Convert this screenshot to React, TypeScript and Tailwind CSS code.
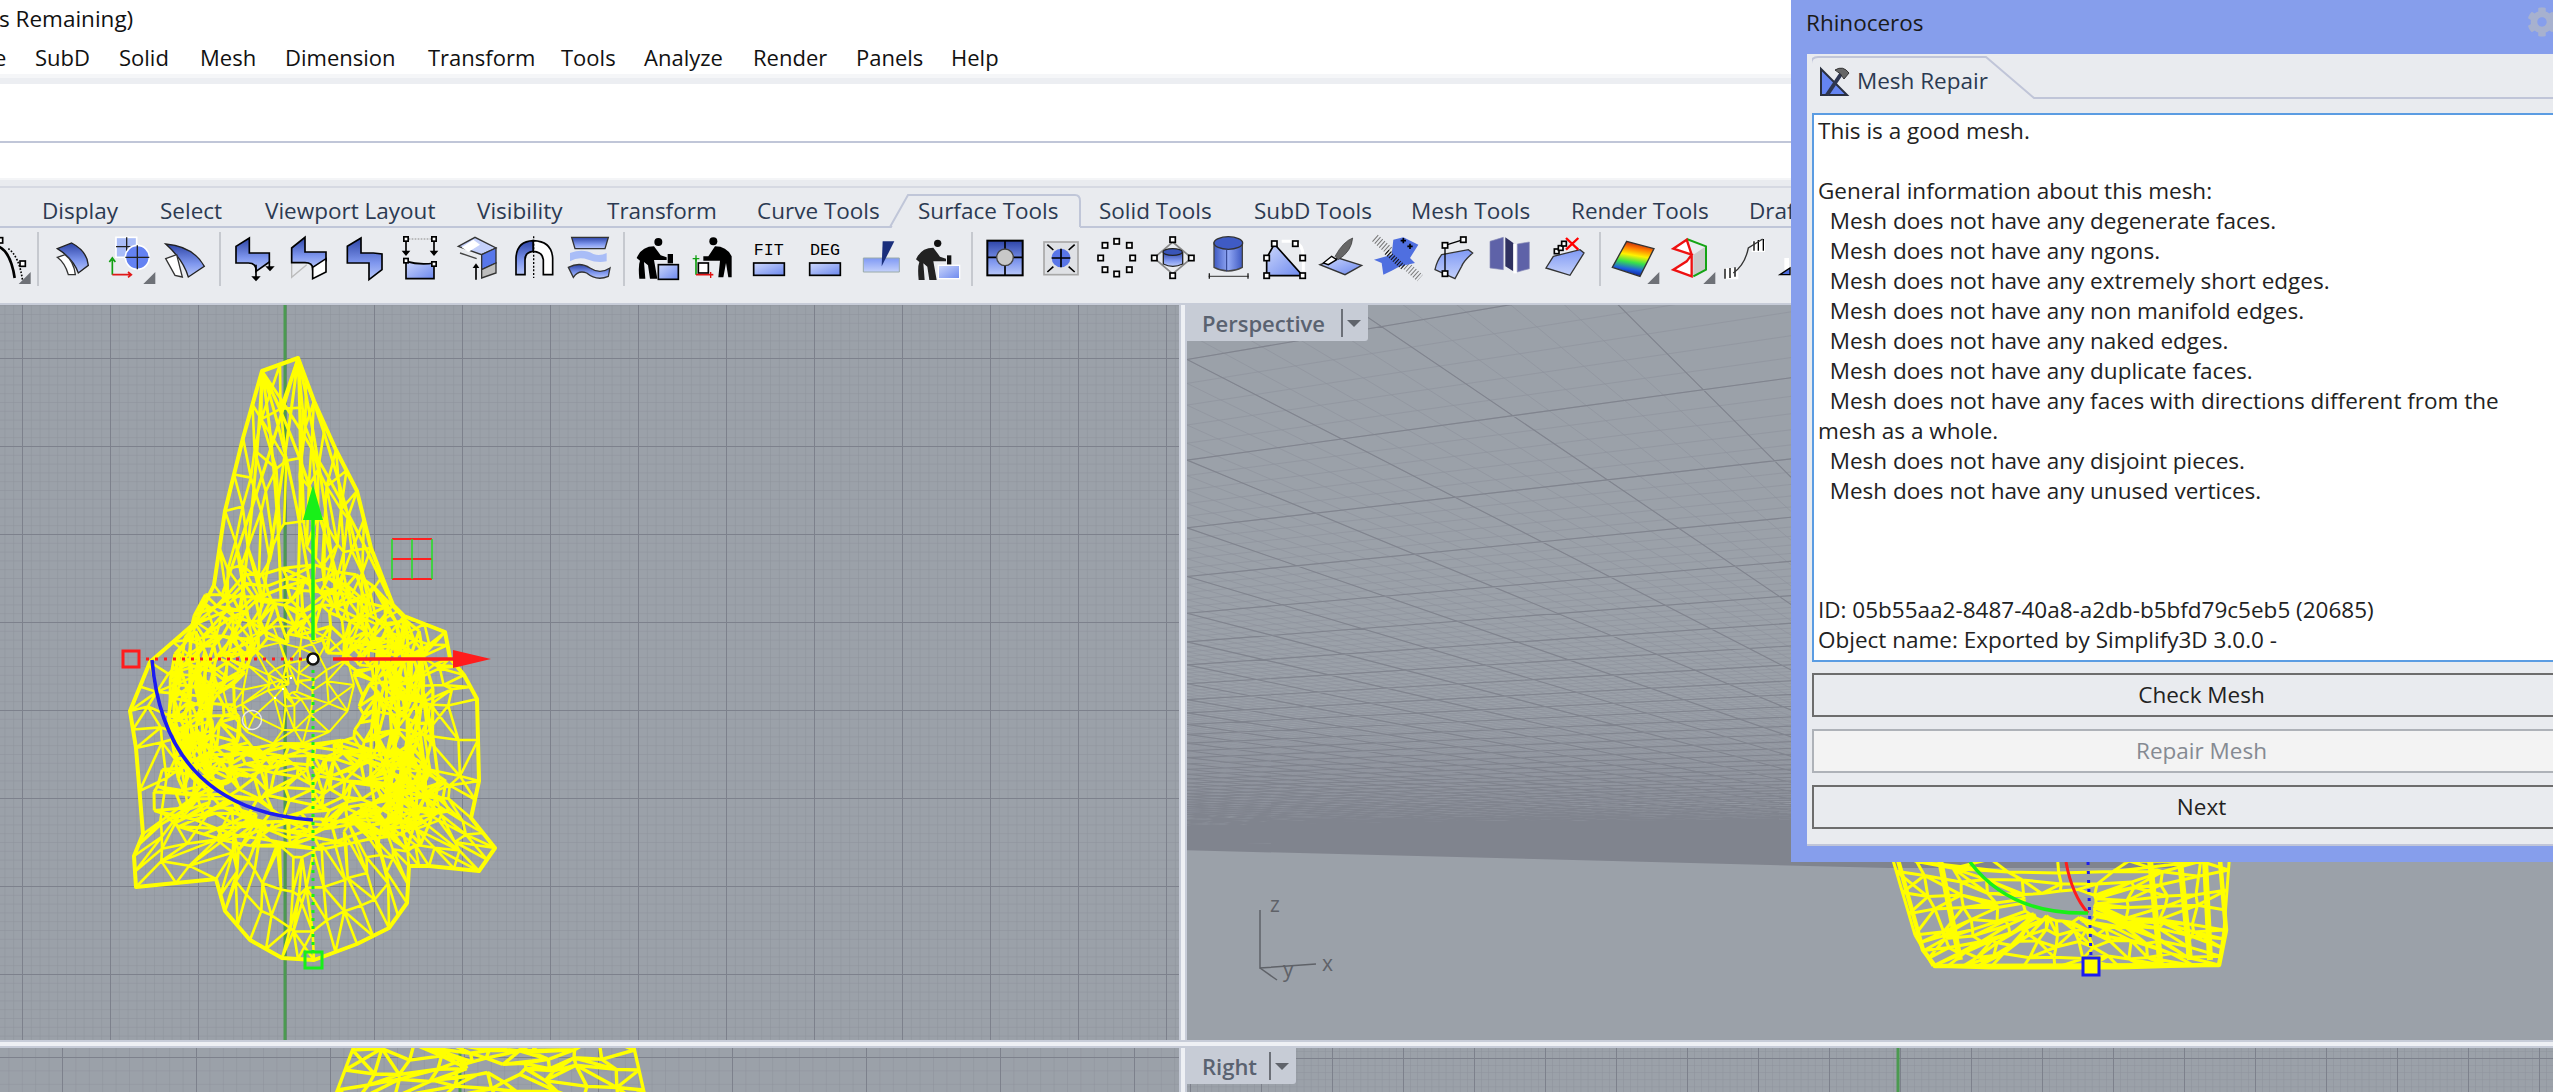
import React from 'react';
import { FaCog } from 'react-icons/fa';

type Pt = [number, number];

// small repeatable random so the wireframe stays the same on every load
const makeRand = (seed: number) => () => {
  seed = (seed * 16807) % 2147483647;
  return seed / 2147483647;
};

// wireframe built from shrunken copies of an outline, joined with diagonals
const wire = (outline: Pt[], c: Pt, rings: number[], jitter: number, seed: number, subdiv = 2) => {
  const rand = makeRand(seed);
  const pts: Pt[] = [];
  outline.forEach((p, i) => {
    const q = outline[(i + 1) % outline.length];
    for (let s = 0; s < subdiv; s++) {
      pts.push([p[0] + ((q[0] - p[0]) * s) / subdiv, p[1] + ((q[1] - p[1]) * s) / subdiv]);
    }
  });
  const grid = rings.map((t) =>
    pts.map(([x, y]): Pt => [
      c[0] + (x - c[0]) * t + (t !== 1 ? (rand() - 0.5) * jitter : 0),
      c[1] + (y - c[1]) * t + (t !== 1 ? (rand() - 0.5) * jitter : 0),
    ]),
  );
  let d = '';
  const seg = (a: Pt, b: Pt) => {
    d += `M${a[0].toFixed(1)} ${a[1].toFixed(1)}L${b[0].toFixed(1)} ${b[1].toFixed(1)}`;
  };
  grid.forEach((ring, r) => {
    ring.forEach((p, i) => {
      const n = (i + 1) % ring.length;
      seg(p, ring[n]);
      if (r + 1 < grid.length) {
        seg(p, grid[r + 1][i]);
        if (rand() > 0.25) seg(p, grid[r + 1][rand() > 0.5 ? n : (i + ring.length - 1) % ring.length]);
      }
    });
  });
  return d;
};

const ellipse = (cx: number, cy: number, rx: number, ry: number, n: number): Pt[] =>
  Array.from({ length: n }, (_, i): Pt => [
    cx + rx * Math.cos((i / n) * Math.PI * 2),
    cy + ry * Math.sin((i / n) * Math.PI * 2),
  ]);

const topOutline: Pt[] = [
  [262, 371], [298, 358], [314, 401], [336, 450], [357, 491], [371, 548], [393, 605], [404, 616], [445, 632],
  [450, 658], [464, 675], [477, 699], [479, 781], [471, 818], [495, 848], [479, 871], [429, 866], [409, 866],
  [407, 903], [389, 928], [357, 944], [314, 960], [282, 958], [250, 940], [225, 911], [216, 879], [136, 887],
  [134, 856], [143, 834], [136, 748], [130, 711], [150, 662], [196, 622], [214, 585], [225, 511], [243, 438],
];
const topMesh = wire(topOutline, [300, 720], [1, 0.86, 0.72, 0.56], 12, 11);
const topRing = wire(ellipse(298, 700, 120, 122, 38), [298, 700], [1.1, 1.02, 0.94, 0.86, 0.76, 0.64, 0.52], 14, 23, 1);
const topRing2 = wire(ellipse(300, 795, 132, 48, 30), [300, 795], [1.12, 0.95, 0.78, 0.58], 10, 37, 1);
const topSide = wire(ellipse(404, 735, 30, 105, 16), [404, 735], [1.1, 0.85, 0.55, 0.25], 9, 41, 1);
const topSide2 = wire(ellipse(192, 715, 20, 75, 14), [192, 715], [1.1, 0.75, 0.35], 7, 43, 1);
const topHollow = wire(ellipse(288, 685, 66, 60, 14), [288, 685], [1, 0.68, 0.36, 0.1], 12, 47, 1);

// long strands running from the tip of the spike down into the body
const spikeRand = makeRand(77);
const spike = Array.from({ length: 10 }, (_, i) => {
  const tip = i % 2 ? 262 : 298;
  const baseX = 222 + i * 18 + spikeRand() * 8;
  return `M${tip} ${i % 2 ? 371 : 358}Q${(tip + baseX) / 2 + 6} 470 ${baseX} ${590 + spikeRand() * 40}`;
}).join('');

const rightMesh = wire(
  [[1890, 850], [2230, 850], [2224, 930], [2219, 965], [2120, 968], [1990, 968], [1933, 966], [1915, 935]],
  [2060, 905], [1, 0.82, 0.62, 0.42, 0.22], 8, 51, 4,
);
const lowMesh = wire(
  [[360, 1030], [630, 1030], [648, 1110], [330, 1110]],
  [490, 1070], [1, 0.8, 0.6, 0.4, 0.2], 14, 71, 4,
);

// ground plane in perspective, both families converge on the same horizon
const perspLines = (step: number, from: number, to: number) => {
  let d = '';
  for (let k = from; k <= to; k += step) {
    const y = 875 - 1 / (0.00194 + 0.00047 * k);
    const slope = (875 - y) / (-1857 - 1187);
    d += `M1187 ${y.toFixed(1)}L2553 ${(y + slope * 1366).toFixed(1)}`;
    d += `M1187 ${y.toFixed(1)}L2190 875`;
  }
  return d;
};
const perspMajor = perspLines(1, -2, 80);
const perspMinor = perspLines(0.2, -2, 30);

const Sq = ({ x, y, s = 16 }: { x: number; y: number; s?: number }) => (
  <rect x={x - s / 2} y={y - s / 2} width={s} height={s} fill="#fff" stroke="#000" strokeWidth="5" />
);

const Tri = ({ x }: { x: number }) => <path d={`M${x} 168H${x + 36}V132Z`} fill="#6e7177" />;

const ManBody = ({ fill = '#000' }: { fill?: string }) => (
  <path
    d="M410 90Q425 55 462 55L482 82L500 88V96H462L472 152H450L444 112L432 102L436 152H418Q414 112 420 98Z"
    fill={fill}
  />
);

// coordinates here are 3x screen pixels, icons are 56x62 on screen
const Ic = ({ x, w = 168, children }: { x: number; w?: number; children: React.ReactNode }) => (
  <svg className="shrink-0 h-[62px]" width={w / 3} height={62} viewBox={`${x} 0 ${w} 186`} fill="none">
    {children}
  </svg>
);

const Sep = () => <div className="w-[2px] h-[54px] mx-[5px] shrink-0 bg-[#c6c9cf] self-center" />;

const Toolbar = () => (
  <div className="flex h-[62px] overflow-hidden">
    <Ic x={0} w={96}>
      <path d="M-6 55Q32 70 44 150" stroke="#000" strokeWidth="8" />
      <path d="M25 62Q58 85 68 160" stroke="#000" strokeWidth="5" strokeDasharray="5 5" />
      <Sq x={68} y={107} />
      <Sq x={0} y={37} />
      <Tri x={56} />
    </Ic>
    <Sep />
    <div className="w-[2px] shrink-0" />
    <Ic x={138}>
      <path d="M172 62L215 45Q262 70 265 112L235 135Q220 92 172 62Z" fill="url(#blu)" stroke="#222" strokeWidth="4" />
      <path d="M172 88L195 80Q222 100 226 140L205 140Q195 105 172 88Z" fill="#fff" stroke="#333" strokeWidth="4" />
    </Ic>
    <Ic x={306}>
      <rect x="348" y="28" width="62" height="60" fill="#a9bcf7" stroke="#fff" strokeWidth="5" />
      <path d="M380 28V88M348 56H410" stroke="#222" strokeWidth="4" />
      <circle cx="412" cy="88" r="36" fill="#6482f2" stroke="#fff" strokeWidth="5" />
      <path d="M412 52V124M376 88H448" stroke="#222" strokeWidth="4" />
      <path d="M337 140V95M328 102L337 90L346 102" stroke="#11a011" strokeWidth="5" />
      <path d="M337 140H390M384 132L394 140L384 148" stroke="#e01818" strokeWidth="5" />
      <Tri x={430} />
    </Ic>
    <Ic x={474}>
      <path d="M497 48Q580 55 613 115L565 147Q550 95 497 48Z" fill="url(#blu)" stroke="#222" strokeWidth="4" />
      <path d="M497 92L530 80L547 147L525 142Z" fill="#fff" stroke="#333" strokeWidth="4" />
    </Ic>
    <Sep />
    <Ic x={678}>
      <path d="M708 55L748 30V75H808V102L768 130Q770 105 745 105H708Z" fill="url(#blu)" stroke="#000" strokeWidth="5" />
      <path d="M768 110V150" stroke="#000" strokeWidth="5" />
      <path d="M754 145H782L768 160Z" fill="#000" />
      <path d="M808 100V122" stroke="#000" strokeWidth="5" />
      <path d="M796 115H824L810 130Z" fill="#000" />
    </Ic>
    <Ic x={846}>
      <path d="M875 105V148L920 110" stroke="#bbb" strokeWidth="4" />
      <path d="M875 60L915 28V72H978V98L938 122Q938 104 915 104H875Z" fill="url(#blu)" stroke="#000" strokeWidth="5" />
      <path d="M938 118L978 92V132L938 152Z" fill="#fff" stroke="#000" strokeWidth="5" />
    </Ic>
    <Ic x={1014}>
      <path d="M1042 55L1083 30V75H1120L1146 78V125L1107 155V105H1042Z" fill="url(#blu)" stroke="#000" strokeWidth="5" />
    </Ic>
    <Ic x={1182}>
      <path d="M1226 33H1294" stroke="#aaa" strokeWidth="4" strokeDasharray="5 4" />
      <path d="M1218 42V72M1302 42V72" stroke="#000" strokeWidth="5" />
      <path d="M1205 68H1231L1218 84ZM1289 68H1315L1302 84Z" fill="#000" />
      <path d="M1218 100V152H1302V105Q1260 112 1218 100Z" fill="url(#lite)" stroke="#000" strokeWidth="5" />
      <Sq x={1218} y={33} s={13} />
      <Sq x={1302} y={33} s={13} />
      <Sq x={1218} y={98} s={13} />
      <Sq x={1302} y={108} s={13} />
    </Ic>
    <Ic x={1350}>
      <path d="M1375 55L1425 28L1488 60L1445 80Z" fill="#c4d0fa" stroke="#333" strokeWidth="4" />
      <path d="M1385 58L1420 35L1440 50L1405 72Z" fill="#fff" />
      <path d="M1445 80L1488 60V105L1445 125Z" fill="#5877ea" stroke="#333" strokeWidth="4" />
      <path d="M1445 125L1488 105V135L1445 150Z" fill="#bdbdbd" stroke="#333" strokeWidth="4" />
      <path d="M1380 75L1430 92" stroke="#444" strokeWidth="4" />
      <path d="M1428 155V115" stroke="#000" strokeWidth="5" />
      <path d="M1418 120H1438L1428 106Z" fill="#000" />
    </Ic>
    <Ic x={18}>
      <path d="M48 140V90Q50 40 100 38V70Q75 72 75 95V140Z" fill="url(#blu)" stroke="#000" strokeWidth="5" />
      <path d="M100 38Q155 40 158 90V140H130V95Q128 72 100 70Z" fill="#fff" stroke="#000" strokeWidth="5" />
      <path d="M101 25V150" stroke="#000" strokeWidth="4" strokeDasharray="6 5" />
    </Ic>
    <Ic x={186}>
      <path d="M215 28H325L315 62H225Z" fill="url(#blu)" stroke="#333" strokeWidth="4" />
      <path d="M210 75Q250 60 280 78Q300 85 320 75V100Q290 105 265 95Q235 85 210 100Z" fill="#a9bdf7" />
      <path d="M205 118Q240 100 270 120Q300 140 330 120L325 145Q290 160 260 135Q235 125 220 148Z" fill="url(#blu)" stroke="#333" strokeWidth="4" />
    </Ic>
    <Sep />
    <Ic x={390}>
      <circle cx="475" cy="42" r="12" fill="#000" />
      <ManBody />
      <rect x="503" y="78" width="16" height="28" fill="#000" />
      <rect x="475" y="110" width="60" height="44" fill="url(#lite)" stroke="#000" strokeWidth="5" />
    </Ic>
    <Ic x={558}>
      <circle cx="640" cy="40" r="12" fill="#000" />
      <path d="M695 85Q680 55 645 55L625 85H610V98H660L655 148H670L678 105L685 148H695Z" fill="#000" />
      <rect x="595" y="105" width="30" height="30" fill="#fff" stroke="#000" strokeWidth="5" />
      <path d="M588 140V92" stroke="#11a011" strokeWidth="5" />
      <path d="M578 92H598M588 82V100" stroke="#11a011" strokeWidth="4" />
      <path d="M588 140H640" stroke="#e01010" strokeWidth="5" />
      <path d="M632 132V150" stroke="#e01010" strokeWidth="4" />
    </Ic>
    <Ic x={726}>
      <text x="806" y="81" textAnchor="middle" fontFamily="'Liberation Mono', monospace" fontSize="50" fill="#000">FIT</text>
      <rect x="761" y="105" width="92" height="37" fill="url(#lite)" stroke="#000" strokeWidth="5" />
    </Ic>
    <Ic x={894}>
      <text x="975" y="81" textAnchor="middle" fontFamily="'Liberation Mono', monospace" fontSize="50" fill="#000">DEG</text>
      <rect x="929" y="105" width="92" height="37" fill="url(#lite)" stroke="#000" strokeWidth="5" />
    </Ic>
    <Ic x={1062}>
      <path d="M1090 90H1198V132H1090Z" fill="url(#lite2)" stroke="#9aa" strokeWidth="3" />
      <path d="M1148 40H1183L1145 115Z" fill="#1a2f7c" />
    </Ic>
    <Ic x={1230}>
      <g transform="translate(838 4)">
        <circle cx="475" cy="42" r="11" fill="#111" />
        <ManBody fill="#222" />
        <rect x="503" y="78" width="13" height="28" fill="#111" />
      </g>
      <rect x="1315" y="112" width="64" height="40" fill="url(#lite)" stroke="#fff" strokeWidth="4" />
    </Ic>
    <Sep />
    <Ic x={24}>
      <rect x="52" y="38" width="106" height="104" fill="url(#blu)" stroke="#000" strokeWidth="6" />
      <path d="M105 38V142M52 88H158" stroke="#000" strokeWidth="5" />
      <circle cx="105" cy="88" r="25" fill="#c8c8c8" stroke="#444" strokeWidth="4" />
    </Ic>
    <Ic x={192}>
      <rect x="222" y="42" width="102" height="98" fill="#dfe1e5" stroke="#a8a8a8" strokeWidth="5" />
      <circle cx="273" cy="90" r="28" fill="#5976e8" />
      <path d="M273 62V118M245 90H301" stroke="#000" strokeWidth="5" />
      <path d="M232 50L250 66M314 50L296 66M232 132L250 116M314 132L296 116" stroke="#000" strokeWidth="5" />
    </Ic>
    <Ic x={360}>
      {([[405, 52], [440, 40], [478, 52], [392, 90], [488, 90], [405, 125], [440, 138], [478, 125]] as Pt[]).map(([x, y]) => (
        <Sq key={`${x}-${y}`} x={x} y={y} />
      ))}
    </Ic>
    <Ic x={528}>
      <path d="M608 42L665 90L608 138L552 90Z" stroke="#888" strokeWidth="5" />
      <path d="M580 72V108Q608 122 638 108V72" fill="url(#blu)" stroke="#222" strokeWidth="4" />
      <ellipse cx="608" cy="72" rx="29" ry="10" fill="#3a55b8" stroke="#222" strokeWidth="4" />
      <Sq x={608} y={35} />
      <Sq x={664} y={90} />
      <Sq x={608} y={143} />
      <Sq x={553} y={90} />
    </Ic>
    <Ic x={696}>
      <path d="M732 45V118Q775 140 817 118V45Z" fill="url(#cyl)" stroke="#444" strokeWidth="4" />
      <ellipse cx="775" cy="45" rx="43" ry="19" fill="#3f5bc4" stroke="#333" strokeWidth="4" />
      <path d="M770 64V130" stroke="#2a3b85" strokeWidth="3" />
      <path d="M716 145H836" stroke="#555" strokeWidth="4" />
      <path d="M718 136V152M834 136V152" stroke="#222" strokeWidth="4" />
    </Ic>
    <Ic x={864}>
      <path d="M935 40H975Q1000 50 1000 90V130" stroke="#fff" strokeWidth="9" />
      <path d="M913 48L998 142H890V90Z" fill="url(#lite)" />
      <path d="M913 48L890 90V143H998L913 48" stroke="#000" strokeWidth="5" />
      {([[913, 47], [976, 47], [890, 90], [998, 90], [890, 143], [998, 143]] as Pt[]).map(([x, y]) => (
        <Sq key={`${x}-${y}`} x={x} y={y} />
      ))}
    </Ic>
    <Ic x={1032}>
      <path d="M1050 110L1105 90L1175 112L1125 140Z" fill="url(#lite)" stroke="#333" strokeWidth="4" />
      <path d="M1060 105L1085 85L1100 95L1075 110Z" fill="#fff" stroke="#000" strokeWidth="4" />
      <path d="M1095 85Q1120 40 1148 30Q1145 70 1105 95Z" fill="#666" stroke="#333" strokeWidth="2" />
    </Ic>
    <Ic x={1200}>
      <path d="M1215 30L1350 150" stroke="#777" strokeWidth="26" strokeDasharray="3 6" />
      <path d="M1270 35L1300 28L1345 50L1320 90L1335 105L1290 115L1265 128L1240 140L1235 105L1212 95L1265 80Z" fill="#4f6fe0" />
      <path d="M1250 72L1300 118" stroke="#111" strokeWidth="18" strokeDasharray="3 5" />
      <path d="M1292 38H1308M1300 30V46M1312 55H1328M1320 47V63" stroke="#000" strokeWidth="5" />
    </Ic>
    <Ic x={78}>
      <path d="M125 80L205 65L218 75Q190 100 185 115L165 152L105 125Q110 100 125 80Z" fill="url(#lite2)" stroke="#333" strokeWidth="4" />
      <path d="M135 52V137M135 52L190 35" stroke="#000" strokeWidth="4" />
      <Sq x={135} y={52} />
      <Sq x={135} y={137} />
      <Sq x={190} y={35} />
    </Ic>
    <Ic x={246}>
      <path d="M270 40L310 28V125L270 120Z" fill="#5e62a8" stroke="#8a8cb8" strokeWidth="2" />
      <path d="M316 28L340 45V130L316 115Z" fill="#2f3160" />
      <path d="M345 48V136" stroke="#fff" strokeWidth="10" />
      <path d="M352 48L388 42V122L352 132Z" fill="#5e62a8" stroke="#8a8cb8" strokeWidth="2" />
    </Ic>
    <Ic x={414}>
      <path d="M460 85L540 65L552 75L510 142L438 120Z" fill="url(#lite2)" stroke="#333" strokeWidth="4" />
      <Sq x={470} y={70} s={14} />
      <Sq x={482} y={60} s={14} />
      <Sq x={492} y={47} s={14} />
      <path d="M498 30L535 65M535 30L498 65" stroke="#f00" strokeWidth="7" />
    </Ic>
    <Sep />
    <Ic x={618}>
      <path d="M680 40L762 62L720 145L637 118Z" fill="url(#rainbow)" stroke="#333" strokeWidth="4" />
      <Tri x={742} />
    </Ic>
    <Ic x={786}>
      <path d="M880 80L918 55V125L880 145Z" fill="#c9c9c9" />
      <path d="M860 33L918 55V125L880 145" stroke="#14a414" strokeWidth="6" />
      <path d="M860 35L820 62L875 80L860 100L820 125L875 145V80Z" fill="#fff" stroke="#ee1111" strokeWidth="7" />
      <Tri x={910} />
    </Ic>
    <Ic x={954}>
      <path d="M972 120H1015V154H972ZM1055 38H1095V72H1055Z" fill="#fff" />
      <path d="M975 152V122M990 150V120M1005 146V118M1062 68V40M1075 68V36M1090 68V33" stroke="#000" strokeWidth="4" />
      <path d="M1000 135Q1035 110 1045 60L1088 33" stroke="#333" strokeWidth="4" />
    </Ic>
    <Ic x={1122}>
      <path d="M1160 90V125" stroke="#fff" strokeWidth="14" />
      <path d="M1140 140L1170 120V140Z" fill="#4f6fe0" stroke="#000" strokeWidth="4" />
    </Ic>
  </div>
);

const menuItems = [
  { label: 'SubD', cls: 'w-[84px]' },
  { label: 'Solid', cls: 'w-[81px]' },
  { label: 'Mesh', cls: 'w-[85px]' },
  { label: 'Dimension', cls: 'w-[143px]' },
  { label: 'Transform', cls: 'w-[133px]' },
  { label: 'Tools', cls: 'w-[83px]' },
  { label: 'Analyze', cls: 'w-[109px]' },
  { label: 'Render', cls: 'w-[103px]' },
  { label: 'Panels', cls: 'w-[95px]' },
  { label: 'Help', cls: 'w-[60px]' },
];

const tabs = [
  { label: 'Display', cls: 'w-[118px]' },
  { label: 'Select', cls: 'w-[105px]' },
  { label: 'Viewport Layout', cls: 'w-[212px]' },
  { label: 'Visibility', cls: 'w-[130px]' },
  { label: 'Transform', cls: 'w-[150px]' },
  { label: 'Curve Tools', cls: 'w-[161px]' },
  { label: 'Surface Tools', cls: 'w-[181px]' },
  { label: 'Solid Tools', cls: 'w-[155px]' },
  { label: 'SubD Tools', cls: 'w-[157px]' },
  { label: 'Mesh Tools', cls: 'w-[160px]' },
  { label: 'Render Tools', cls: 'w-[178px]' },
  { label: 'Drafting', cls: 'w-[120px]' },
];

const reportTop = [
  'This is a good mesh.',
  ' ',
  'General information about this mesh:',
  '  Mesh does not have any degenerate faces.',
  '  Mesh does not have any ngons.',
  '  Mesh does not have any extremely short edges.',
  '  Mesh does not have any non manifold edges.',
  '  Mesh does not have any naked edges.',
  '  Mesh does not have any duplicate faces.',
  '  Mesh does not have any faces with directions different from the',
  'mesh as a whole.',
  '  Mesh does not have any disjoint pieces.',
  '  Mesh does not have any unused vertices.',
];

const Gradients = () => (
  <svg className="absolute w-0 h-0">
    <defs>
      <linearGradient id="blu" x1="0" y1="0" x2="0" y2="1">
        <stop offset="0" stopColor="#2d44a6" />
        <stop offset="0.6" stopColor="#7f97ee" />
        <stop offset="1" stopColor="#b9c8fa" />
      </linearGradient>
      <linearGradient id="lite" x1="0" y1="0" x2="1" y2="1">
        <stop offset="0" stopColor="#cdd8fc" />
        <stop offset="1" stopColor="#6c88ee" />
      </linearGradient>
      <linearGradient id="lite2" x1="0" y1="0" x2="0" y2="1">
        <stop offset="0" stopColor="#7f99f4" />
        <stop offset="1" stopColor="#c4d1fb" />
      </linearGradient>
      <linearGradient id="cyl" x1="0" y1="0" x2="1" y2="0">
        <stop offset="0" stopColor="#3e59c2" />
        <stop offset="0.5" stopColor="#92a8f4" />
        <stop offset="1" stopColor="#3e59c2" />
      </linearGradient>
      <linearGradient id="rainbow" x1="0.6" y1="0" x2="0.4" y2="1">
        <stop offset="0" stopColor="#b01010" />
        <stop offset="0.2" stopColor="#ff7a00" />
        <stop offset="0.4" stopColor="#fff200" />
        <stop offset="0.6" stopColor="#39e24a" />
        <stop offset="0.8" stopColor="#1e5fe0" />
        <stop offset="1" stopColor="#0a0a80" />
      </linearGradient>
      <pattern id="g-minor" x="22" y="358" width="8.8" height="8.8" patternUnits="userSpaceOnUse">
        <path d="M0 0H8.8M0 0V8.8" stroke="#8d929b" strokeWidth="1" fill="none" />
      </pattern>
      <pattern id="g-major" x="22" y="358" width="88" height="88" patternUnits="userSpaceOnUse">
        <path d="M0 0H88M0 0V88" stroke="#7d818c" strokeWidth="2" fill="none" />
      </pattern>
      <pattern id="g-minor2" x="62" y="1057" width="13.4" height="13.4" patternUnits="userSpaceOnUse">
        <path d="M0 0H13.4M0 0V13.4" stroke="#8d929b" strokeWidth="1" fill="none" />
      </pattern>
      <pattern id="g-major2" x="62" y="1057" width="134" height="134" patternUnits="userSpaceOnUse">
        <path d="M0 0H134M0 0V134" stroke="#7d818c" strokeWidth="2" fill="none" />
      </pattern>
      <pattern id="g-minor3" x="1332" y="1058" width="7.1" height="7.1" patternUnits="userSpaceOnUse">
        <path d="M0 0H7.1M0 0V7.1" stroke="#8d929b" strokeWidth="1" fill="none" />
      </pattern>
      <pattern id="g-major3" x="1332" y="1058" width="71" height="71" patternUnits="userSpaceOnUse">
        <path d="M0 0H71M0 0V71" stroke="#7d818c" strokeWidth="2" fill="none" />
      </pattern>
      <clipPath id="plane">
        <path d="M1187 305H2553V868L1800 868L1399 877L1187 853Z" />
      </clipPath>
    </defs>
  </svg>
);

const TopViewport = () => (
  <svg className="block shrink-0" width={1179} height={735} viewBox="0 305 1179 735">
    <rect x="0" y="305" width="1179" height="735" fill="#9ba1a9" />
    <rect x="0" y="305" width="1179" height="735" fill="url(#g-minor)" />
    <rect x="0" y="305" width="1179" height="735" fill="url(#g-major)" />
    <path d="M285 305V1040" stroke="#4b9a50" strokeWidth="3" />
    <g fill="none" stroke="#ffff00" strokeLinejoin="round">
      <path d={topMesh} strokeWidth="2.6" />
      <path d={spike} strokeWidth="3" />
      <path d={topHollow} strokeWidth="2" />
      <path d={topRing} strokeWidth="3" />
      <path d={topRing2} strokeWidth="3" />
      <path d={topSide} strokeWidth="3.2" />
      <path d={topSide2} strokeWidth="3.2" />
      <path d={`M${topOutline.map((p) => p.join(' ')).join('L')}Z`} strokeWidth="4" />
    </g>
    <path d="M392 539H432M392 559H432M392 579H432" stroke="#ff2020" strokeWidth="2" />
    <path d="M392 539V579M412 539V579M432 539V579" stroke="#22e022" strokeWidth="1.5" />
    <path d="M152 660Q165 810 313 820" fill="none" stroke="#1c1cf0" strokeWidth="3.5" />
    <path d="M146 659H308" stroke="#ff1c1c" strokeWidth="3" strokeDasharray="3 6" />
    <path d="M313 670V955" stroke="#18f018" strokeWidth="3" strokeDasharray="3 5" />
    <rect x="123" y="651" width="16" height="16" fill="none" stroke="#ff1c1c" strokeWidth="3" />
    <rect x="305" y="952" width="17" height="16" fill="none" stroke="#18f018" strokeWidth="3" />
    <path d="M333 659H455" stroke="#ff1c1c" strokeWidth="3.5" />
    <path d="M453 650L491 659L453 668Z" fill="#ff1c1c" />
    <path d="M313 640V518" stroke="#18f018" strokeWidth="3.5" />
    <path d="M303 520L313 485L323 520Z" fill="#18f018" />
    <circle cx="313" cy="659" r="5.5" fill="#fff" stroke="#111" strokeWidth="2.5" />
    <circle cx="252" cy="720" r="9.5" fill="none" stroke="#e8e8e8" strokeWidth="1.5" />
    <path d="M274 698h2M282 689h2M290 678h2" stroke="#fff" strokeWidth="2" />
  </svg>
);

const ViewLabel = ({ title, cls }: { title: string; cls: string }) => (
  <div className={`absolute top-0 left-0 flex items-center bg-[#c7ccd6] rounded-br-[3px] pl-[15px] ${cls}`}>
    <span className="flex-1 text-[22px] font-semibold text-[#5a6270]">{title}</span>
    <span className="w-[2px] h-[28px] bg-[#6c7078]" />
    <span className="w-0 h-0 mx-[4px] border-x-[7px] border-x-transparent border-t-[7px] border-t-[#5f636b]" />
    <span className="w-[3px]" />
  </div>
);

const PerspectiveViewport = () => (
  <div className="relative flex-1 overflow-hidden">
    <svg className="block" width={1366} height={735} viewBox="1187 305 1366 735">
      <rect x="1187" y="305" width="1366" height="735" fill="#9ba1a9" />
      <g clipPath="url(#plane)" fill="none">
        <path d={perspMinor} stroke="#8f949d" strokeWidth="0.7" />
        <path d={perspMajor} stroke="#80848e" strokeWidth="1.1" />
      </g>
      <g fill="none" stroke="#5f6268" strokeWidth="1.5">
        <path d="M1260 910V968L1316 964" />
        <path d="M1260 968L1277 980" />
      </g>
      <text x="1270" y="912" fontFamily="'Open Sans', sans-serif" fontSize="21" fill="#5f6268">z</text>
      <text x="1322" y="971" fontFamily="'Open Sans', sans-serif" fontSize="21" fill="#5f6268">x</text>
      <text x="1283" y="977" fontFamily="'Open Sans', sans-serif" fontSize="21" fill="#5f6268">y</text>
      <g fill="none" stroke="#ffff00" strokeLinejoin="round">
        <path d={rightMesh} strokeWidth="3" />
        <path d="M1898 860L1923 950L1935 966L2219 965L2226 930L2220 860" strokeWidth="4.5" />
        <path d="M2150 860L2160 960M2180 860L2190 960M2205 860L2210 960M1940 860L1960 960" strokeWidth="6" />
      </g>
      <path d="M2066 862Q2072 895 2088 913" fill="none" stroke="#ff1c1c" strokeWidth="3" />
      <path d="M1970 862Q2010 915 2088 913" fill="none" stroke="#18f018" strokeWidth="3.5" />
      <path d="M2088 862L2091 958" stroke="#1c1cf0" strokeWidth="3" strokeDasharray="3 6" />
      <rect x="2083" y="958" width="16" height="17" fill="#ffff00" stroke="#1c1cf0" strokeWidth="3" />
    </svg>
    <ViewLabel title="Perspective" cls="w-[181px] h-[36px]" />
  </div>
);

const BottomRow = () => (
  <div className="flex h-[44px]">
    <svg className="block shrink-0" width={1179} height={44} viewBox="0 1048 1179 44">
      <rect x="0" y="1048" width="1179" height="44" fill="#9ba1a9" />
      <rect x="0" y="1048" width="1179" height="44" fill="url(#g-minor2)" />
      <rect x="0" y="1048" width="1179" height="44" fill="url(#g-major2)" />
      <path d="M460 1048V1092" stroke="#4b9a50" strokeWidth="3" />
      <path d={lowMesh} fill="none" stroke="#ffff00" strokeWidth="3.4" />
    </svg>
    <div className="w-[8px] shrink-0 bg-[#c7ccd8] px-[2px]">
      <div className="h-full bg-[#eef0f4]" />
    </div>
    <div className="relative flex-1 overflow-hidden">
      <svg className="block" width={1366} height={44} viewBox="1187 1048 1366 44">
        <rect x="1187" y="1048" width="1366" height="44" fill="#9ba1a9" />
        <rect x="1187" y="1048" width="1366" height="44" fill="url(#g-minor3)" />
        <rect x="1187" y="1048" width="1366" height="44" fill="url(#g-major3)" />
        <path d="M1898 1048V1092" stroke="#4b9a50" strokeWidth="3" />
      </svg>
      <ViewLabel title="Right" cls="w-[109px] h-[36px]" />
    </div>
  </div>
);

const MeshRepairDialog = () => (
  <div className="absolute top-0 left-[1791px] w-[800px] h-[862px] bg-[#869eec] pl-[16px] pb-[16px] flex flex-col">
    <div className="h-[54px] shrink-0 flex items-center pb-[8px] text-[22.5px] text-[#1a1a1a] relative">
      <span className="-ml-[1px]">Rhinoceros</span>
      <FaCog className="absolute left-[720px] top-[7px] text-[#a7b1cf] w-[30px] h-[30px]" />
    </div>
    <div className="flex-1 bg-[#e9ebef] flex flex-col pl-[5px] border-b-[2px] border-b-[#c0c5d8]">
      <div className="relative h-[44px] shrink-0">
        <svg className="absolute left-0 top-0" width={800} height={46} viewBox="0 0 800 46" fill="none">
          <path d="M-1 44V10Q-1 3 6 3H174L222 44H800" stroke="#c0c5d8" strokeWidth="2" />
        </svg>
        <div className="absolute left-[7px] top-[10px] flex items-center gap-[6px]">
          <svg width={32} height={32} viewBox="0 0 32 32" fill="none">
            <path d="M2 30V4L28 30Z" fill="#6585f2" stroke="#2a3040" strokeWidth="2" />
            <path d="M8 30L24 6" stroke="#2d3550" strokeWidth="4" />
            <path d="M16 5Q24 0 30 8L25 14Q22 8 16 5Z" fill="#666" stroke="#333" />
          </svg>
          <span className="text-[22.5px] text-[#2b3a52] whitespace-nowrap">Mesh Repair</span>
        </div>
      </div>
      <div className="h-[549px] shrink-0 mt-[15px] bg-white border-y-2 border-l-2 border-[#5b9ce2] pl-[4px] pt-[1px] pb-[5px] flex flex-col justify-between text-[22.5px] leading-[30px] text-[#222] whitespace-pre">
        <div>
          {reportTop.map((line, i) => (
            <div key={i}>{line}</div>
          ))}
        </div>
        <div>
          <div>ID: 05b55aa2-8487-40a8-a2db-b5bfd79c5eb5 (20685)</div>
          <div>Object name: Exported by Simplify3D 3.0.0 -</div>
        </div>
      </div>
      <div className="flex flex-col gap-[12px] pt-[11px]">
        <button className="h-[44px] border-2 border-[#6d6d6d] bg-[#e9ebef] text-[22.5px] text-[#222]">Check Mesh</button>
        <button className="h-[44px] border-2 border-[#aeb2b8] bg-[#f3f3f3] text-[22.5px] text-[#858a92]">Repair Mesh</button>
        <button className="h-[44px] border-2 border-[#6d6d6d] bg-[#e9ebef] text-[22.5px] text-[#222]">Next</button>
      </div>
    </div>
  </div>
);

export default function App() {
  return (
    <div className="relative w-[2553px] h-[1092px] overflow-hidden bg-white font-['Open_Sans',sans-serif]">
      <Gradients />
      <div className="h-[37px] flex items-center text-[22.5px] text-[#111] whitespace-pre">
        <span className="-ml-[1px]">s Remaining)</span>
      </div>
      <div className="h-[37px] flex items-center text-[22px] text-[#111] pt-[3px] whitespace-nowrap">
        <span className="w-[41px] -ml-[6px]">e</span>
        {menuItems.map((m) => (
          <span key={m.label} className={m.cls}>{m.label}</span>
        ))}
      </div>
      <div className="h-[10px] bg-[#eceef2] border-t-[4px] border-t-[#f5f6f8]" />
      <div className="h-[57px] border-b-[2px] border-b-[#c0c6d8] box-content" />
      <div className="h-[35px]" />
      <div className="h-[127px] bg-[#e9ebef] pt-[6px] border-t-[2px] border-t-[#f4f5f7] border-b-[2px] border-b-[#c7ccd8]">
        <div className="relative h-[42px] flex items-center border-y-2 border-t-[#d6d9e2] border-b-[#c0c6d8] text-[22.5px] text-[#2c3a52] whitespace-nowrap pl-[42px] pt-[8px]">
          <svg className="absolute left-[889px] top-[5px]" width={195} height={38} viewBox="0 0 195 38" fill="none">
            <path d="M1 38L19 3H186Q191 3 191 8V38" fill="#e9ebef" />
            <path d="M1 34L19 2H186Q191 2 191 8V34" stroke="#c0c6d8" strokeWidth="2" />
          </svg>
          {tabs.map((t) => (
            <span key={t.label} className={`relative ${t.cls}`}>{t.label}</span>
          ))}
        </div>
        <Toolbar />
      </div>
      <div className="flex h-[735px]">
        <TopViewport />
        <div className="w-[8px] shrink-0 bg-[#c7ccd8] px-[2px]">
          <div className="h-full bg-[#eef0f4]" />
        </div>
        <PerspectiveViewport />
      </div>
      <div className="h-[8px] bg-[#c7ccd8] py-[2px]">
        <div className="h-full bg-[#eef0f4]" />
      </div>
      <BottomRow />
      <MeshRepairDialog />
    </div>
  );
}
